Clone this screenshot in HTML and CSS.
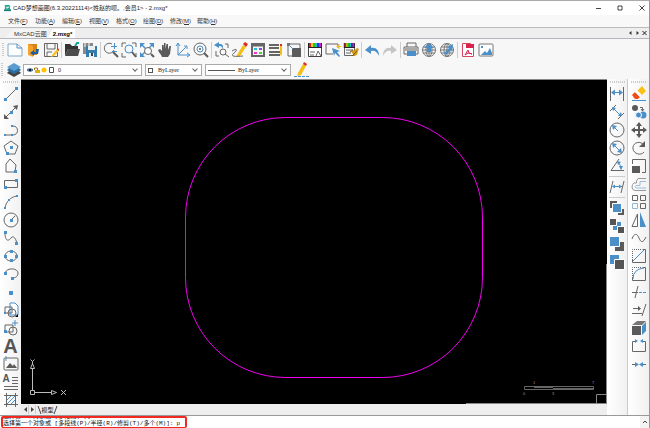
FILE: index.html
```html
<!DOCTYPE html>
<html lang="zh-CN">
<head>
<meta charset="utf-8">
<title>CAD梦想画图</title>
<link rel="stylesheet" href="styles.css">
</head>
<body>
<div class="window">
<header class="titlebar">
<svg class="logo" viewBox="0 0 8 8"><path d="M1 0h5l1 1v4H1z" fill="#18a58a"/><path d="M2 2.500h3M3 4l3-2" stroke="#fff" fill="none"/><path d="M0 5h8v2H0z" fill="#167c78"/></svg>
<h1>CAD梦想画图(6.3.20221114)&lt;姓赵的呗。,会员1&gt; - 2.mxg*</h1>
<div class="winbtns">
<button aria-label="最小化"><svg viewBox="0 0 6 6"><path d="M1 3.500h5"/></svg></button>
<button aria-label="最大化"><svg viewBox="0 0 6 6"><path d="M1 1h4v4H1z"/></svg></button>
<button aria-label="关闭"><svg viewBox="0 0 6 6"><path d="M.5.5l5 5M5.500.5l-5 5"/></svg></button>
</div>
</header>
<nav class="menu">
<button>文件(<u>F</u>)</button><button>功能(<u>A</u>)</button><button>编辑(<u>E</u>)</button><button>视图(<u>V</u>)</button><button>格式(<u>O</u>)</button><button>绘图(<u>D</u>)</button><button>修改(<u>M</u>)</button><button>帮助(<u>H</u>)</button>
</nav>
<div class="doctabs">
<button class="tab"><span>MxCAD云图</span></button><button class="tab active"><span>2.mxg*</span></button>
<div class="tabctl">
<button aria-label="上一个"><svg viewBox="0 0 6 6"><path d="M4 1v4L1.500 3z"/></svg></button>
<button aria-label="下一个"><svg viewBox="0 0 6 6"><path d="M2 1v4l2.500-2z"/></svg></button>
<button aria-label="关闭标签"><svg viewBox="0 0 6 6"><path class="x" d="M1 1l4 4M5 1L1 5"/></svg></button>
</div>
</div>
<div class="toolbar">
<i class="grip"></i>
<button aria-label="新建"><svg viewBox="0 0 16 16"><path d="M1 2h9l5 4v8H1z" fill="#fbfdff" stroke="#84a9c8"/><path class="b" d="M10 2v4h5"/></svg></button>
<button aria-label="打开"><svg viewBox="0 0 16 16"><path d="M3 2h9v11H3z" fill="#d98218"/><path d="M3 2l5 2v11l-5-2z" fill="#f6a32c"/><path d="M14 7l-1 5H9v2l-4-3 4-3v2h2V7z" fill="#1f5d9c"/></svg></button>
<button aria-label="保存"><svg viewBox="0 0 16 16"><path class="k" d="M1.500 1.500h13v13h-13zM4 2v5h8V2M4 14v-4h5"/><path d="M9 13l5-6 2 2-5 5-3 1z" fill="#f5c324"/><path class="fr" d="M14 6l2 1v2l-2-2z"/></svg></button>
<i class="sep"></i>
<button aria-label="打开目录"><svg viewBox="0 0 16 16"><path d="M1 14V2h5l2 2h6v3H4z" fill="#333"/><path d="M1 14l3-7h12l-2 7z" fill="#4c4c4c"/><path d="M11 4l2-3h2" stroke="#16a997" stroke-width="2" fill="none"/></svg></button>
<button aria-label="另存为"><svg viewBox="0 0 16 16"><path d="M1 1h10v11H1z" fill="#888"/><path d="M4 4h11v11H4z" fill="#347cae"/><path d="M6 4h7v4H6zM7 11h5v4H7z" fill="#e8f1f6"/><path d="M3 1v4M7 1v3" stroke="#fff"/><path d="M9 11v3h2v-3" fill="#345"/></svg></button>
<i class="sep"></i>
<button aria-label="缩放"><svg viewBox="0 0 16 16"><path class="k" d="M9 2a5 5 0 1 0 2 6"/><path class="k2" d="M10 10l5 5"/><path class="b" d="M8 4.500h6M11.500 1v6M9 9.500h5"/></svg></button>
<button aria-label="窗口缩放"><svg viewBox="0 0 16 16"><path class="k" d="M1 5V1h4M11 1h4v4M1 11v4h4M15 11v4"/><circle class="b" cx="8" cy="7" r="4"/><path class="k2" d="M11 10l4 5"/></svg></button>
<button aria-label="范围缩放"><svg viewBox="0 0 16 16"><path class="fb" d="M1 1h5L4 3l3 3-1 1-3-3-2 2zM15 1h-5l2 2-3 3 1 1 3-3 2 2zM1 15h5l-2-2 3-3-1-1-3 3-2-2z"/><circle cx="9" cy="9" r="3.500" fill="#fff" stroke="#666"/><path class="k2" d="M12 12l3 3"/></svg></button>
<button aria-label="平移"><svg viewBox="0 0 16 16"><path class="fk" d="M5 15c-1-3-3-4-4-7l2-1 2 2V3h1.500v4L7 1h1.500v6l1-5H11v6l1.500-4H14l-1 8-2 3z"/></svg></button>
<button aria-label="坐标系"><svg viewBox="0 0 16 16"><path class="b" d="M3 2v11h11M3 13l8-8M1 4l2-3 2 3M12 11l3 2-3 2M9 4h3v3"/></svg></button>
<button aria-label="查看"><svg viewBox="0 0 16 16"><circle class="k" cx="7" cy="7" r="6"/><circle class="b" cx="7" cy="7" r="3"/><circle class="fk" cx="7" cy="7" r="1"/><path class="k2" d="M11 11l4 4"/></svg></button>
<i class="sep"></i>
<button aria-label="上一视图"><svg viewBox="0 0 16 16"><path class="fb" d="M5 0L0 3l5 3V4c3 0 3 1 3 3 2-3 1-5-3-5z"/><path class="k" d="M2 9v5h3M11 2h3v4"/><circle class="k" cx="9" cy="10" r="3"/><path class="k" d="M11 12l4 3"/></svg></button>
<button aria-label="画笔"><svg viewBox="0 0 16 16"><path d="M5 13L11 3l3 2-6 9-4 1z" fill="#f6bd16"/><path class="fr" d="M11 2l2-2 3 2-2 3z"/><path class="k" d="M0 9c5-3 6-1 2 2s-1 4 9 3"/></svg></button>
<button aria-label="图层特性"><svg viewBox="0 0 16 16"><path d="M2 2h12v12H2z" fill="#f4f4f4" stroke="#666" stroke-width="2"/><path d="M2 3h12" stroke="#666" stroke-width="3"/><path d="M4 6h3v2H4z" fill="#26bcd4"/><path d="M9 6h3v2H9z" fill="#8c4bdc"/><path d="M4 10h3v2H4z" fill="#f233d1"/><path d="M9 10h3v2H9z" fill="#58cf45"/></svg></button>
<button aria-label="线型"><svg viewBox="0 0 16 16"><path d="M1 3h10M1 6h10M1 10h11M1 13h11" stroke="#666" stroke-width="2"/><path d="M12 4h2v8l-1 2-1-2z" fill="#f6bd16"/><path class="fr" d="M12 2h2v2h-2z"/></svg></button>
<button aria-label="块"><svg viewBox="0 0 16 16"><path class="k" d="M2 2h12v12H2z"/><path d="M1 1h3v3H1z" fill="#777"/><path d="M6 6h9v9H6z" fill="#5c5c5c"/><path class="b" d="M3 3l4 4"/></svg></button>
<i class="sep"></i>
<button aria-label="颜色文字"><svg viewBox="0 0 16 16"><path d="M1.500 1.500h13v13h-13z" fill="#fff" stroke="#444"/><use href="#spectrum"/><path class="k" d="M3 10h5M3 13h4M9 14l2-5 3 5"/></svg></button>
<button aria-label="快速选择"><svg viewBox="0 0 16 16"><path class="k" d="M8 12H1V2h12v4"/><path class="fb" d="M7 6l8 3-3 1 3 4-1 1-4-4-1 3z"/><path d="M14 2v5M11.500 4.500H16" stroke="#f6bd16"/></svg></button>
<button aria-label="匹配特性"><svg viewBox="0 0 16 16"><path class="k" d="M1.500 1.500h10v12h-10zM3 8h7M3 11h5"/><use href="#spectrum" transform="scale(.8 1)"/><path d="M8 9l3 5 3-1 1-4 1-2-2-1-2 2z" fill="#d49c17"/><path d="M7 10l3-2M9 14l5-5" stroke="#7d5c16"/></svg></button>
<i class="sep"></i>
<button aria-label="撤销"><svg viewBox="0 0 16 16"><path class="fb" d="M7 3L1 8l6 4V9c4-1 6 1 8 5 0-6-3-9-8-8z"/></svg></button>
<button aria-label="重做"><svg viewBox="0 0 16 16"><path d="M9 3l6 5-6 4V9c-4-1-6 1-8 5 0-6 3-9 8-8z" fill="#c5c5c5"/></svg></button>
<i class="sep"></i>
<button aria-label="打印"><svg viewBox="0 0 16 16"><path class="k" d="M4 5V1h9v4M4 12H1V5h14v7h-2"/><path d="M1 6h14v3H1z" fill="#aaa"/><path d="M4 9h9v5H4z" fill="#4a8fc8"/></svg></button>
<button aria-label="上传"><svg viewBox="0 0 16 16"><use href="#globe"/><path class="fb" d="M8 1L3 6h3v4h4V6h3z"/></svg></button>
<button aria-label="网络"><svg viewBox="0 0 16 16"><use href="#globe"/><path class="fb" d="M14 2L8 5l2 1-5 5 2 2 5-5 1 2z"/></svg></button>
<i class="sep"></i>
<button aria-label="输出PDF"><svg viewBox="0 0 16 16"><path d="M2.500 1.500h8l3 4v9h-11z" fill="#fff" stroke="#d84464"/><path d="M6 2h8v4H6z" fill="#d9234d"/><path d="M5 13l3-5 1 3 3 1-4-1-3 2" stroke="#d9234d" fill="none"/></svg></button>
<button aria-label="输出图片"><svg viewBox="0 0 16 16"><rect x="1" y="2" width="14" height="12" rx="1" fill="#fff" stroke="#777"/><path class="fb" d="M3 13l4-4 2 2 3-5 2 5v2zM3 4h2v2H3z"/></svg></button>
</div>
<div class="toolbar props">
<i class="grip"></i>
<button aria-label="图层"><svg viewBox="0 0 16 16"><path d="M1 11l7 4 7-4-2-2H3z" fill="#444"/><path d="M1 8l7 4 7-4-2-2H3z" fill="#2d6fa2"/><path d="M1 5l7-4 7 4-7 4z" fill="#5a9bd0"/></svg></button>
<label class="combo layer">
<svg class="states" viewBox="0 0 28 8"><path d="M1 3l3-1 3 1v2L4 6 1 5z" fill="#58789a"/><path d="M3 3h2v2H3z" fill="#124"/><path d="M8.500 4V2h3v2" fill="none" stroke="#9b7514"/><path d="M9 4h5v3H9z" fill="#e3ad18"/><circle cx="18" cy="4" r="2.500" fill="#ffc400"/><path d="M23.500 1.500h4v5h-4z" fill="#fff" stroke="#555"/></svg>
<select aria-label="当前图层"><option>0</option></select></label>
<label class="combo color"><i class="swatch"></i><select aria-label="颜色"><option>ByLayer</option></select></label>
<label class="combo line"><i class="rule"></i><select aria-label="线型选择"><option>ByLayer</option></select></label>
<button aria-label="编辑线型"><svg viewBox="0 0 16 16"><path d="M5 11l5-9 3 2-5 9-4 1z" fill="#f6bd16"/><path class="fr" d="M10 2l1-2 3 2-1 2z"/><path d="M1 14.500h15" stroke="#4a8fc8" stroke-dasharray="3 1"/></svg></button>
</div>
<main class="work">
<aside class="palette left">
<i class="hgrip"></i>
<button aria-label="直线"><svg viewBox="0 0 16 16"><path class="k" d="M2 14L14 2"/><path class="fb" d="M1 12h3v3H1zM12 1h3v3h-3z"/></svg></button>
<button aria-label="构造线"><svg viewBox="0 0 16 16"><path class="k" d="M2 14L14 2"/><path class="fk" d="M10 2l5-1-1 5zM1 10v5h5z"/><path class="fb" d="M7 7h3v3H7z"/></svg></button>
<button aria-label="多段线"><svg viewBox="0 0 16 16"><path class="k" d="M2 13h8c6 0 6-9 0-9"/><path class="fb" d="M1 12h2v2H1zM8 12h2v2H8zM8 3h2v2H8z"/></svg></button>
<button aria-label="正多边形"><svg viewBox="0 0 16 16"><path class="k" d="M8 1l7 5-3 8H4L1 6z"/><path class="fb" d="M7 6h3v3H7zM3 12h3v3H3z"/></svg></button>
<button aria-label="多边形"><svg viewBox="0 0 16 16"><path class="k" d="M3 14V6l4-5 6 6-1 7z"/><path class="fb" d="M11 12h3v3h-3z"/></svg></button>
<button aria-label="矩形"><svg viewBox="0 0 16 16"><path class="k" d="M1.500 4.500h13v7h-13z"/><path class="fb" d="M12 3h3v3h-3zM1 10h3v3H1z"/></svg></button>
<button aria-label="圆弧"><svg viewBox="0 0 16 16"><path class="k" d="M2 14C3 8 7 3 14 2"/><path class="fb" d="M1 13h2v2H1zM5 5h2v2H5zM13 1h2v2h-2z"/></svg></button>
<button aria-label="圆"><svg viewBox="0 0 16 16"><circle class="k" cx="8" cy="8" r="7"/><path class="k" d="M8 8l4-4"/><path class="fb" d="M7 7h3v3H7z"/></svg></button>
<button aria-label="样条曲线"><svg viewBox="0 0 16 16"><path class="k" d="M2 3c0 9 4 8 6 5s5 0 6 6"/><path class="fb" d="M1 1h3v3H1zM12 12h3v3h-3z"/></svg></button>
<button aria-label="椭圆"><svg viewBox="0 0 16 16"><ellipse class="k" cx="8" cy="8" rx="6" ry="5"/><path class="fb" d="M1 7h3v3H1zM12 7h3v3h-3zM7 2h3v3H7zM7 11h3v3H7z"/></svg></button>
<button aria-label="椭圆弧"><svg viewBox="0 0 16 16"><path class="k" d="M2 7c2-6 13-5 13 0 0 3-2 5-6 5"/><path class="fb" d="M1 6h3v3H1zM8 11h3v3H8z"/></svg></button>
<button aria-label="点"><svg viewBox="0 0 16 16"><path class="fb" d="M6 7h4v4H6z"/></svg></button>
<button aria-label="插入块"><svg viewBox="0 0 16 16"><path d="M7 1h5l3 3v9H7z" fill="#fff" stroke="#4a8fc8"/><path class="k" d="M2 5h7v6H2z"/><circle class="k" cx="9" cy="11" r="4"/><path d="M12 15h3v-3z"/><path class="fb" d="M1 10h2v2H1z"/></svg></button>
<button aria-label="创建块"><svg viewBox="0 0 16 16"><path class="k" d="M2 5h8v7H2z"/><circle class="k" cx="10" cy="11" r="4"/><path class="b" d="M12 0v6M9 3h6"/><path class="fb" d="M1 10h3v3H1z"/></svg></button>
<button class="letter" aria-label="文字">A</button>
<button aria-label="图片"><svg viewBox="0 0 16 16"><rect class="k" x="1" y="2" width="14" height="12" rx="1"/><path class="fk" d="M3 12l4-5 3 3 1-2 3 4z"/><path class="b" d="M3 0v5"/></svg></button>
<button class="mtext" aria-label="多行文字"><span>A</span><svg viewBox="0 0 16 16"><path class="k" d="M9 3.500h6M9 6.500h6M9 9.500h6M1 12.500h14M1 15.500h14"/></svg></button>
<button aria-label="图案填充"><svg viewBox="0 0 16 16"><path class="k" d="M3.500 1v14M12.500 1v14M1 3.500h14M1 12.500h14"/><path class="b" d="M4 8l4-4M4 12l8-8M8 12l4-4"/></svg></button>
</aside>
<section class="view">
<svg class="canvas" viewBox="0 0 586 324" preserveAspectRatio="none">
<rect x="164.500" y="37.500" width="297" height="260" rx="100" stroke="#f000f0" fill="none"/>
<g stroke="#bbb" fill="none"><path d="M9.500 310.500h4v4h-4zM11.500 310v-22M9.500 288.500h4l-2-5zM14 312.500h16M30.500 310.500v4l5-2z"/><path d="M9.500 279.500l2 2 2-2M11.500 281.500v3M40 310l5 5M45 310l-5 5"/></g>
<g stroke="#666" fill="none"><path d="M503.500 306.500h69v3h-69z"/><path d="M513 307h19M532 309h40" stroke-width="2"/><path d="M575.500 324v-9.500h10M445 323.500h141M585.500 184v140" stroke="#888"/></g>
<g class="ticks"><text x="502" y="315">0</text><text x="512" y="304">1</text><text x="531" y="315">3</text><text x="571" y="304">7</text></g>
</svg>
<div class="sheets"><button aria-label="前一页"><svg viewBox="0 0 5 5"><path d="M4 0v5L1 2.500z"/></svg></button><button aria-label="后一页"><svg viewBox="0 0 5 5"><path d="M1 0v5l3-2.500z"/></svg></button><button class="sheet">模型</button></div>
</section>
<aside class="palette dims">
<i class="hgrip"></i>
<button aria-label="线性标注"><svg viewBox="0 0 16 16"><path class="k" d="M1.500 1v14M14.500 1v14"/><path class="b" d="M3 6.500h10"/><path class="fb" d="M2 6.500l4-3v6zM14 6.500l-4-3v6z"/></svg></button>
<button aria-label="对齐标注"><svg viewBox="0 0 16 16"><path class="k" d="M1 7l6-6M9 15l6-6"/><path class="b" d="M5 5l6 6"/><path class="fb" d="M3 3l4 1-3 3zM13 12l-4 0 3-4z"/></svg></button>
<button aria-label="半径标注"><svg viewBox="0 0 16 16"><circle class="k" cx="8" cy="8" r="7"/><path class="b" d="M9 9L5 5"/><path class="fb" d="M3 3l5 1-4 4z"/></svg></button>
<button aria-label="直径标注"><svg viewBox="0 0 16 16"><circle class="k" cx="8" cy="8" r="7"/><path class="b" d="M4 4l8 8"/><path class="fb" d="M3 3l5 1-4 4zM13 13l-5-1 4-4z"/></svg></button>
<button aria-label="角度标注"><svg viewBox="0 0 16 16"><path class="k" d="M10 1L2 12.500h13"/><path class="b" d="M9 4q3 3 3 7"/><path class="fb" d="M8 3l4 1-3 3zM10 8h4l-2 4z"/></svg></button>
<i class="hsep"></i>
<button aria-label="标注编辑"><svg viewBox="0 0 16 16"><path class="k" d="M4 2L1 14M15 2l-3 12"/><path class="b" d="M4 7.500h9"/><path class="fb" d="M3 7.500l3-2v4zM13 7.500l-3-2v4z"/></svg></button>
<i class="hsep"></i>
<button aria-label="前置"><svg viewBox="0 0 16 16"><path class="fk" d="M1 1h7v7H1zM9 9h6v6H9z"/><path d="M3.500 3.500h9v9h-9z" fill="#4a8fc8" stroke="#fff"/></svg></button>
<button aria-label="后置"><svg viewBox="0 0 16 16"><path class="fb" d="M4 4h8v8H4z"/><path d="M.5.5h7v7h-7zM8.500 8.500h7v7h-7z" fill="#555" stroke="#fff"/></svg></button>
<button aria-label="置于对象之上"><svg viewBox="0 0 16 16"><path class="fk" d="M6 6h9v9H6z"/><path d="M.5.5h10v10H.5z" fill="#4a8fc8" stroke="#fff"/></svg></button>
<button aria-label="置于对象之下"><svg viewBox="0 0 16 16"><path class="fb" d="M1 1h9v9H1z"/><path d="M5.500 5.500h10v10h-10z" fill="#555" stroke="#fff"/></svg></button>
</aside>
<aside class="palette modify">
<i class="hgrip"></i>
<button aria-label="删除"><svg viewBox="0 0 16 16"><path d="M6 5l5-5 4 5-5 5z" fill="#fcc015"/><path d="M1 9l3-3 5 5-2 2H4z" fill="#f14b18"/><path d="M4 6l2-2 5 5-2 2z" fill="#fff"/><path class="b" d="M1 14.500h14"/></svg></button>
<button aria-label="复制"><svg viewBox="0 0 16 16"><circle class="fk" cx="4" cy="4" r="3"/><path class="k" d="M9 3.500h2.500V7M10 5l1.500 2L13 5"/><circle class="fb" cx="12" cy="11" r="3.500"/><circle cx="7.500" cy="11" r="3" fill="#4a8fc8" stroke="#fff"/></svg></button>
<button aria-label="移动"><svg viewBox="0 0 16 16"><path class="k2" d="M8 2v12M2 8h12"/><path class="fk" d="M8 0l3 4H5zM8 16l3-4H5zM0 8l4-3v6zM16 8l-4-3v6z"/></svg></button>
<button aria-label="旋转"><svg viewBox="0 0 16 16"><path class="k" d="M12 4C7 0 1 4 2 9s8 7 11 3"/><path class="fk" d="M14 1v6H8z"/></svg></button>
<button aria-label="缩放对象"><svg viewBox="0 0 16 16"><path class="k" d="M1.500 6V1.500h13v13H11"/><path class="fk" d="M1 8h8v7H1z"/></svg></button>
<button aria-label="偏移"><svg viewBox="0 0 16 16"><path d="M15 2.500H7L5.500 5v2H3q-2 1-2 4t3 3.500h11" stroke="#999" fill="none"/><path d="M15 5.500H9V9.500H5q-2 1 0 2.500h10" stroke="#9bbdd8" fill="none"/></svg></button>
<button aria-label="阵列"><svg viewBox="0 0 16 16"><path class="k" d="M1.500 1.500h5v5h-5zM9.500 1.500h5v5h-5zM9.500 9.500h5v5h-5z"/><path d="M1.500 9.500h5v5h-5z" stroke="#91b8d7" fill="none"/></svg></button>
<button aria-label="镜像"><svg viewBox="0 0 16 16"><path class="k" d="M6.500 2v12.500H1z"/><path class="fb" d="M9 0v15h6z"/></svg></button>
<button aria-label="曲线"><svg viewBox="0 0 16 16"><path class="k" d="M1 9c2-6 5-6 7-1s4 5 7-1"/></svg></button>
<button aria-label="倒角"><svg viewBox="0 0 16 16"><path class="k" d="M1.500 12V1.500h10" stroke-dasharray="1 1"/><path class="k" d="M1.500 12v2.500h13v-13H12"/><path class="b" d="M2 13L13 2"/></svg></button>
<button aria-label="圆角"><svg viewBox="0 0 16 16"><path class="k" d="M1.500 12V1.500h10" stroke-dasharray="1 1"/><path class="k" d="M1.500 12v2.500h13v-13H12"/><path class="b" d="M2 13Q2 3 13 2"/></svg></button>
<button aria-label="修剪"><svg viewBox="0 0 16 16"><path class="k" d="M7 2L4 14M1 8.500h6"/><path class="b" d="M8 8.500h8" stroke-dasharray="3 1"/></svg></button>
<button aria-label="延伸"><svg viewBox="0 0 16 16"><path class="k" d="M15 2l-4 12M2 6.500h6M1 11.500h10"/><path class="fk" d="M7 4l3 2.500L7 9z"/></svg></button>
<button aria-label="长方体"><svg viewBox="0 0 16 16"><path d="M1 5l5-4h9l-4 4z" fill="#777"/><path class="fk" d="M1 6h9v9H1z"/><path class="fb" d="M11 6l4-4v9l-4 4z"/></svg></button>
<button aria-label="打断"><svg viewBox="0 0 16 16"><path class="k" d="M4 3.500H1.500v10h13v-10H12"/><path class="fb" d="M4 1l3 2-3 2zM12 1L9 3l3 2z"/></svg></button>
<button aria-label="合并"><svg viewBox="0 0 16 16"><path class="k" d="M1 8.500h4M11 8.500h4"/><path class="fb" d="M4 6l4 2.500L4 11zM12 6L8 8.500l4 2.500z"/></svg></button>
</aside>
</main>
<footer class="command">
<div class="log">
<p>选择第一个对象或 [多段线(P)]: r</p>
<div class="prompt"><label for="cmd">选择第一个对象或 [多段线(P)/半径(R)/修剪(T)/多个(M)]:</label><input id="cmd" value="p"></div>
</div>
<button class="up" aria-label="向上滚动"><svg viewBox="0 0 6 6"><path d="M1 4l2-2 2 2"/></svg></button>
</footer>
</div>
<svg class="defs" viewBox="0 0 16 16"><defs>
<g id="spectrum"><path d="M1 1h14v5H1z" fill="#222"/><path d="M2 1h2v4H2z" fill="#e21b1b"/><path d="M4 1h2v4H4z" fill="#e5d31b"/><path d="M6 1h2v4H6z" fill="#21c52b"/><path d="M8 1h2v4H8z" fill="#18bccb"/><path d="M10 1h2v4h-2z" fill="#2630e0"/><path d="M12 1h2v4h-2z" fill="#d321c8"/></g>
<g id="globe" fill="none" stroke="#777"><circle cx="8" cy="8" r="6.500"/><ellipse cx="8" cy="8" rx="3" ry="6.500"/><path d="M2 5h12M1 8h14M2 11h12M8 1v14"/></g>
</defs></svg>
</body>
</html>
```

FILE: styles.css
```css
* { box-sizing: border-box; }
body { margin: 0; font: 6px/8px "Liberation Sans", "Noto Sans CJK SC", sans-serif; color: #333; background: #f7f7f7; }
button { border: 0; padding: 0; margin: 0; background: none; font: inherit; color: inherit; display: flex; align-items: center; justify-content: center; flex: none; }
svg { display: block; }
.defs { position: absolute; width: 0; height: 0; }
.window { height: 100vh; display: flex; flex-direction: column; border-right: 1px solid #999; border-top: 1px solid #aaa; overflow: hidden; }

.titlebar { display: flex; align-items: center; flex: none; height: 14px; background: #fff; padding: 0 4px; gap: 2px; }
.logo { width: 7px; height: 7px; }
h1 { margin: 0; font-size: 6px; font-weight: 400; color: #222; flex: 1; white-space: nowrap; }
.winbtns { display: flex; gap: 16px; }
.winbtns svg { width: 6px; height: 6px; fill: none; stroke: #444; }

.menu { display: flex; flex: none; height: 12px; padding-left: 8px; background: #f8f8f8; }
.menu button { width: 27px; justify-content: flex-start; }

.doctabs { display: flex; flex: none; height: 12px; padding-left: 5px; border-top: 1px solid #bbb; border-bottom: 1px solid #b5b5bb; background: #eee; align-items: flex-end; }
.tab { height: 9px; padding: 0 1px 0 9px; background: #f4f4f4; clip-path: polygon(8px 0, 100% 0, 100% 100%, 0 100%); }
.tab.active { background: #fff; font-weight: 700; color: #000; padding: 0 3px 0 5px; clip-path: polygon(5px 0, 100% 0, 100% 100%, 0 100%); }
.tabctl { margin-left: auto; display: flex; align-self: center; padding-right: 1px; }
.tabctl svg { width: 7px; height: 6px; fill: #333; }
.tabctl .x { stroke: #222; stroke-width: 1; }

.toolbar { display: flex; align-items: center; flex: none; height: 22px; padding-left: 2px; background: #f7f7f7; }
.toolbar button { width: 18px; height: 18px; }
.toolbar svg { width: 16px; height: 16px; }
.grip { width: 2px; height: 14px; margin-right: 2px; background: repeating-linear-gradient(#ccc 0 1px, transparent 1px 2px); flex: none; }
.sep { width: 1px; height: 16px; margin: 0 1px; background: #ccc; flex: none; }
.k { fill: none; stroke: #666; }
.k2 { fill: none; stroke: #5c5c5c; stroke-width: 2; }
.b { fill: none; stroke: #4a8fc8; }
.fb { fill: #4a8fc8; }
.fk { fill: #5a5a5a; }
.fr { fill: #d92c24; }

.props { height: 18px; padding-left: 1px; }
.combo { display: flex; align-items: center; height: 12px; border: 1px solid #aaa; background: #fff; margin-right: 3px; padding: 0 2px; }
.combo select { appearance: none; border: 0; background: transparent; padding: 0; margin: 0; flex: 1; min-width: 0; font: 6px/8px "Liberation Serif", serif; color: #222; }
.combo::after { content: ""; width: 3px; height: 3px; border: solid #666; border-width: 0 1px 1px 0; transform: rotate(45deg); margin: 0 2px 2px 0; }
.layer { flex: 0 1 119px; gap: 4px; }
.toolbar .states { width: 28px; height: 8px; flex: none; }
.color { flex: 0 1 57px; gap: 5px; }
.swatch { width: 5px; height: 5px; border: 1px solid #555; }
.line { flex: 0 1 86px; gap: 3px; margin-right: 1px; }
.rule { width: 27px; height: 1px; background: #555; }

.work { display: flex; flex: 1; min-height: 0; }
.palette { display: flex; flex-direction: column; align-items: center; flex: none; width: 21px; background: linear-gradient(90deg, #fff, #f1f1f1); padding-top: 2px; }
.palette button { width: 18px; height: 18px; }
.palette svg { width: 16px; height: 16px; }
.hgrip { height: 2px; width: 15px; background: repeating-linear-gradient(90deg, #ccc 0 1px, transparent 1px 2px); margin-bottom: 2px; flex: none; }
.hsep { width: 16px; height: 1px; margin: 1px 0; background: #ccc; flex: none; }
.dims { border-right: 1px solid #ccc; }
.letter { font: 700 20px/18px "Liberation Sans", sans-serif; color: #555; }
.palette .mtext { position: relative; }
.mtext span { position: absolute; left: 1px; top: 1px; font: 700 10px/10px "Liberation Sans", sans-serif; color: #555; }
.view { flex: 1; display: flex; flex-direction: column; min-width: 0; }
.canvas { background: #000; width: 100%; flex: 1; min-height: 0; box-shadow: 0 -1px #888; margin-top: 1px; }
.ticks { font: 4px "Liberation Sans", sans-serif; fill: #999; }
.sheets { display: flex; align-items: center; flex: none; height: 11px; padding-left: 1px; background: #eee; }
.sheets svg { width: 5px; height: 5px; fill: #444; }
.sheets button { width: 7px; height: 9px; border-right: 1px solid #ccc; }
.sheets .sheet { width: 17px; margin-left: 3px; border: 0; color: #111; gap: 1px; }
.sheet::before, .sheet::after { content: ""; width: 1px; height: 8px; flex: none; background: #444; transform: skewX(20deg); }
.sheet::after { transform: skewX(-20deg); }

.command { display: flex; flex: none; height: 13px; border-top: 1px solid #999; background: #fff; }
.log { width: 186px; border: 1px solid #f02a22; border-width: 2px 2px 1px 2px; border-radius: 2px; margin-left: 1px; display: flex; flex-direction: column; justify-content: flex-end; overflow: hidden; color: #111; font: 6px/7px "Liberation Mono", "Noto Sans CJK SC", monospace; white-space: nowrap; }
.log p { margin: 0; }
.prompt { display: flex; flex: none; height: 7px; gap: 3px; }
.log input { border: 0; padding: 0; margin: 0; width: 6px; height: 7px; font: inherit; color: inherit; background: none; }
.up { margin-left: auto; width: 9px; background: #f3f3f3; }
.up svg { width: 6px; height: 6px; fill: none; stroke: #444; }
```
